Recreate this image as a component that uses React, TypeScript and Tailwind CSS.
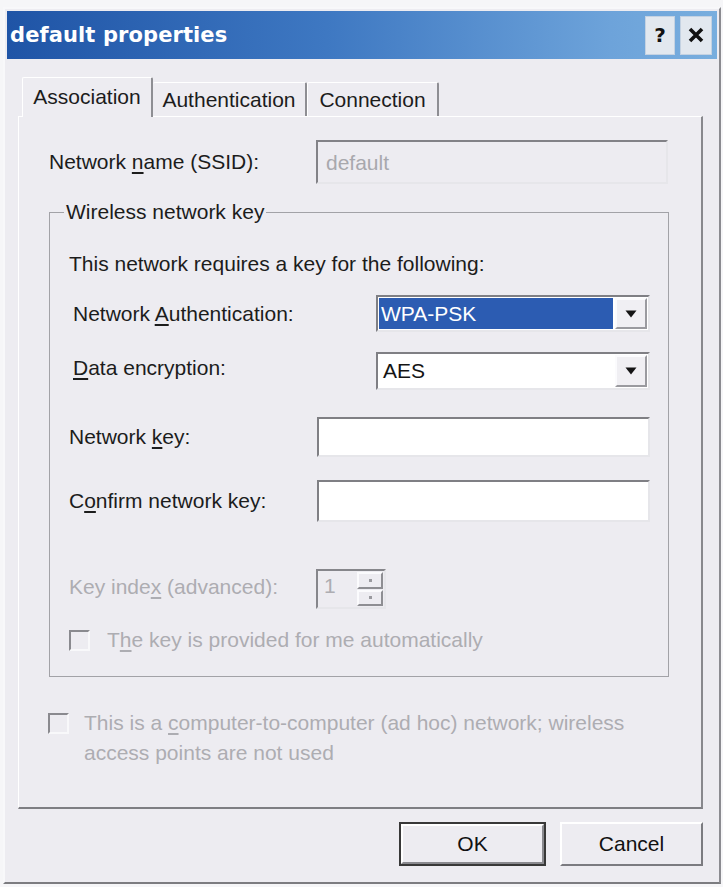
import React from "react";

function U({ children }: { children: React.ReactNode }) {
  return <span className="underline underline-offset-[3px] decoration-[1.5px]">{children}</span>;
}

function Arrow() {
  return (
    <svg width="12" height="8" viewBox="0 0 12 8">
      <path d="M0.5 0.5H11.5L6 7.5Z" fill="#141414" />
    </svg>
  );
}

function Select({ value, highlighted }: { value: string; highlighted?: boolean }) {
  return (
    <div className="w-[274px] h-full border-2 border-t-[#7f7f84] border-l-[#7f7f84] border-b-[#e6e6ea] border-r-[#e6e6ea] bg-white flex p-[1px]">
      <div
        className={
          highlighted
            ? "flex-1 bg-[#2c5cb2] text-white pl-[2px] flex items-center"
            : "flex-1 text-[#141414] pl-[4px] flex items-center"
        }
      >
        {value}
      </div>
      <div className="ml-[2px] w-[32px] h-full bg-[#f0eff3] border-2 border-t-[#fbfbfd] border-l-[#fbfbfd] border-b-[#9a9a9f] border-r-[#9a9a9f] flex items-center justify-center">
        <Arrow />
      </div>
    </div>
  );
}

function Input({ w }: { w: string }) {
  return (
    <div
      className={`${w} h-full border-2 border-t-[#7f7f84] border-l-[#7f7f84] border-b-[#e6e6ea] border-r-[#e6e6ea] bg-white`}
    />
  );
}

function Check() {
  return (
    <div className="w-[21px] h-[21px] shrink-0 border-2 border-t-[#8a8a8f] border-l-[#8a8a8f] border-b-[#f8f8fa] border-r-[#f8f8fa] bg-[#edecf1]" />
  );
}

export default function App() {
  return (
    <div className="w-[723px] h-[887px] bg-[#f6f6f8] pt-[7px] pl-[3px] font-['Liberation_Sans',Arial,sans-serif] text-[21px] text-[#1c1c1c] overflow-hidden">
      <div className="w-[718px] h-[877px] bg-[#edecf1] border-2 border-t-[#f8f8fa] border-l-[#f8f8fa] border-r-[#8b8b90] border-b-[#7c7c80] p-[2px] flex flex-col">
        {/* Title bar */}
        <div className="h-[48px] shrink-0 bg-[linear-gradient(to_right,#1f54a6,#3e78c2_45%,#6da3da_85%,#78aede)] flex items-center justify-between pl-[3px] pr-[5px]">
          <span className="text-white font-bold font-['DejaVu_Sans',sans-serif] text-[21px] leading-none tracking-[0.1px]">
            default properties
          </span>
          <div className="flex gap-[5px]">
            <div className="w-[30px] h-[39px] bg-[#e2e8ef] border border-[#c4d2e2] flex items-center justify-center font-['DejaVu_Sans',sans-serif] font-bold text-[20px] text-[#111]">
              ?
            </div>
            <div className="w-[32px] h-[39px] bg-[#e2e8ef] border border-[#c4d2e2] flex items-center justify-center">
              <svg width="16" height="16" viewBox="0 0 16 16">
                <path d="M2 2L14 14M14 2L2 14" stroke="#111" strokeWidth="3.6" />
              </svg>
            </div>
          </div>
        </div>

        {/* Tabs */}
        <div className="mt-[18px] ml-[11px] h-[39px] flex items-end pl-[4px]">
          <div className="relative z-10 -mb-[1px] w-[131px] h-[40px] bg-[#edecf1] border-t border-l border-t-white border-l-white border-r-2 border-r-[#8e8e93] rounded-t-[2px] flex items-center justify-center pb-[2px]">
            Association
          </div>
          <div className="w-[154px] h-[34px] border-t border-t-white border-r-2 border-r-[#8e8e93] rounded-t-[2px] flex items-center justify-center">
            Authentication
          </div>
          <div className="w-[132px] h-[34px] border-t border-l border-t-white border-l-white border-r-2 border-r-[#8e8e93] rounded-t-[2px] flex items-center justify-center">
            Connection
          </div>
        </div>

        {/* Panel */}
        <div className="ml-[11px] w-[685px] h-[693px] shrink-0 border-t border-l border-t-white border-l-white border-r-2 border-b-2 border-r-[#88888d] border-b-[#7e7e83] flex flex-col">
          <div className="mt-[23px] h-[44px] flex items-center">
            <div className="w-[297px] pl-[30px]">
              Network <U>n</U>ame (SSID):
            </div>
            <div className="w-[352px] h-full border-2 border-t-[#828287] border-l-[#828287] border-b-[#e6e6ea] border-r-[#e6e6ea] bg-[#edecf1] text-[#a8a8ad] pl-[8px] pt-[5px]">
              default
            </div>
          </div>

          <fieldset className="mt-[16px] ml-[30px] w-[620px] h-[477px] border border-[#a2a2a7]">
            <legend className="ml-[14px] px-[2px] leading-[24px]">Wireless network key</legend>
            <div className="pl-[19px] flex flex-col">
              <div className="mt-[28px] leading-[24px]">This network requires a key for the following:</div>

              <div className="mt-[19px] h-[37px] flex items-center">
                <div className="w-[307px] pl-[4px]">
                  Network <U>A</U>uthentication:
                </div>
                <Select value="WPA-PSK" highlighted />
              </div>

              <div className="mt-[20px] h-[38px] flex items-center">
                <div className="w-[307px] pl-[4px] -mt-[6px]">
                  <U>D</U>ata encryption:
                </div>
                <Select value="AES" />
              </div>

              <div className="mt-[27px] h-[40px] flex items-center">
                <div className="w-[248px]">
                  Network <U>k</U>ey:
                </div>
                <Input w="w-[333px]" />
              </div>

              <div className="mt-[23px] h-[42px] flex items-center">
                <div className="w-[248px]">
                  C<U>o</U>nfirm network key:
                </div>
                <Input w="w-[333px]" />
              </div>

              <div className="mt-[47px] h-[40px] flex items-center text-[#adadb2]">
                <div className="w-[247px] -mt-[4px]">
                  Key inde<U>x</U> (advanced):
                </div>
                <div className="w-[70px] h-full border-2 border-t-[#86868b] border-l-[#86868b] border-b-[#e6e6ea] border-r-[#e6e6ea] bg-[#edecf1] flex">
                  <div className="flex-1 pl-[6px] leading-[30px]">1</div>
                  <div className="w-[28px] flex flex-col p-[1px] gap-[1px]">
                    <div className="flex-1 border-2 border-t-[#fbfbfd] border-l-[#fbfbfd] border-b-[#8e8e93] border-r-[#8e8e93] flex items-center justify-center">
                      <div className="w-[3px] h-[3px] bg-[#9a9a9f]" />
                    </div>
                    <div className="flex-1 border-2 border-t-[#fbfbfd] border-l-[#fbfbfd] border-b-[#8e8e93] border-r-[#8e8e93] flex items-center justify-center">
                      <div className="w-[3px] h-[3px] bg-[#9a9a9f]" />
                    </div>
                  </div>
                </div>
              </div>

              <div className="mt-[19px] flex items-center text-[#adadb2]">
                <Check />
                <div className="ml-[17px] leading-[24px]">
                  T<U>h</U>e key is provided for me automatically
                </div>
              </div>
            </div>
          </fieldset>

          <div className="mt-[31px] ml-[29px] flex items-start text-[#adadb2]">
            <div className="mt-[5px]">
              <Check />
            </div>
            <div className="ml-[15px] leading-[30px]">
              This is a <U>c</U>omputer-to-computer (ad hoc) network; wireless
              <br />
              access points are not used
            </div>
          </div>
        </div>

        {/* Buttons */}
        <div className="mt-[13px] ml-[11px] w-[685px] flex justify-end gap-[14px]">
          <div className="w-[147px] h-[44px] border-2 border-[#383838]">
            <div className="w-full h-full border-2 border-t-white border-l-white border-b-[#8a8a8f] border-r-[#8a8a8f] flex items-center justify-center text-[#111]">
              OK
            </div>
          </div>
          <div className="w-[143px] h-[44px] border-2 border-t-white border-l-white border-b-[#7b7b80] border-r-[#7b7b80] flex items-center justify-center text-[#111]">
            Cancel
          </div>
        </div>
      </div>
    </div>
  );
}
